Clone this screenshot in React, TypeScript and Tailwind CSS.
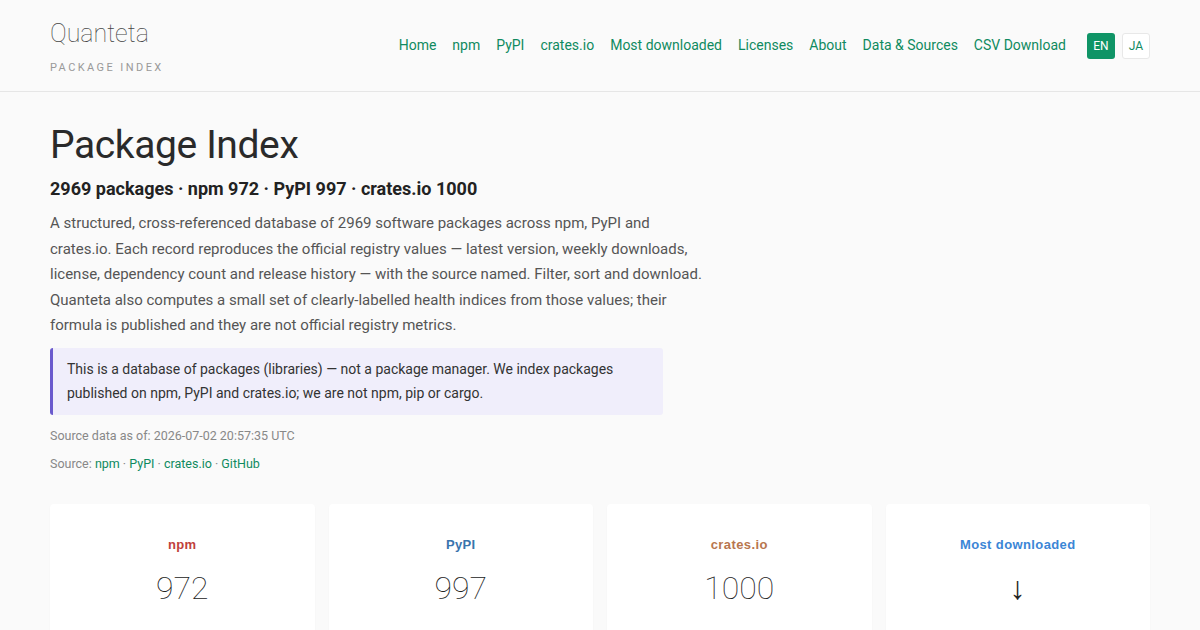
const navLinks = [
  "Home",
  "npm",
  "PyPI",
  "crates.io",
  "Most downloaded",
  "Licenses",
  "About",
  "Data & Sources",
  "CSV Download",
];

const cards = [
  { label: "npm", value: "972", color: "text-[#c0413b]" },
  { label: "PyPI", value: "997", color: "text-[#3a74ad]" },
  { label: "crates.io", value: "1000", color: "text-[#b8764f]" },
  { label: "Most downloaded", value: "↓", color: "text-[#3b86d6]" },
];

const App = () => {
  return (
    <div className="min-h-screen bg-[#fafafa] font-['Roboto',sans-serif] text-[#222]">
      <header className="border-b border-[#e6e6e6]">
        <div className="mx-auto flex h-[91px] w-[1100px] items-center justify-between">
          <div className="pt-[2px]">
            <div className="text-[25px] leading-[30px] font-thin text-[#444]">Quanteta</div>
            <div className="mt-[12px] text-[11px] leading-[14px] tracking-[0.22em] text-[#999]">
              PACKAGE INDEX
            </div>
          </div>
          <nav className="flex items-center">
            {navLinks.map((l) => (
              <a key={l} className="ml-[16px] text-[14px] text-[#0f8a5f]">
                {l}
              </a>
            ))}
            <div className="ml-[21px] flex gap-[7px]">
              <span className="flex h-[26px] w-[28px] items-center justify-center rounded-[3px] bg-[#0f9466] text-[12px] text-white">
                EN
              </span>
              <span className="flex h-[26px] w-[28px] items-center justify-center rounded-[3px] border border-[#e8e8e8] bg-white text-[12px] text-[#0f8a5f]">
                JA
              </span>
            </div>
          </nav>
        </div>
      </header>

      <main className="mx-auto w-[1100px] pt-[30px]">
        <h1 className="text-[39px] leading-[46px] font-normal text-[#2a2a2a] tracking-[-0.01em]">Package Index</h1>
        <h2 className="mt-[10px] text-[18px] leading-[22px] font-bold text-[#222]">
          2969 packages · npm 972 · PyPI 997 · crates.io 1000
        </h2>
        <p className="mt-[11px] w-[660px] text-[15px] leading-[25.6px] text-[#555]">
          A structured, cross-referenced database of 2969 software packages across npm, PyPI and
          <br />
          crates.io. Each record reproduces the official registry values — latest version, weekly downloads,
          license, dependency count and release history — with the source named. Filter, sort and download.
          Quanteta also computes a small set of clearly-labelled health indices from those values; their
          formula is published and they are not official registry metrics.
        </p>
        <div className="mt-[9px] w-[613px] rounded-[3px] border-l-[3px] border-[#6a5acd] bg-[#f0eefb] px-[14px] pt-[9px] pb-[10px] text-[14px] leading-[24px] text-[#333]">
          This is a database of packages (libraries) — not a package manager. We index packages published on
          npm, PyPI and crates.io; we are not npm, pip or cargo.
        </div>
        <div className="mt-[12px] text-[12.5px] leading-[18px] text-[#888]">
          Source data as of: 2026-07-02 20:57:35 UTC
        </div>
        <div className="mt-[10px] text-[12.5px] leading-[18px] text-[#888]">
          Source: <a className="text-[#0f8a5f]">npm</a> · <a className="text-[#0f8a5f]">PyPI</a> ·{" "}
          <a className="text-[#0f8a5f]">crates.io</a> · <a className="text-[#0f8a5f]">GitHub</a>
        </div>

        <div className="mt-[31px] grid grid-cols-4 gap-[14px]">
          {cards.map((c) => (
            <div
              key={c.label}
              className="h-[140px] rounded-[4px] bg-white pt-[33px] text-center shadow-[0_1px_2px_rgba(0,0,0,0.04)]"
            >
              <div className={`font-['Liberation_Sans',sans-serif] text-[13px] leading-[16px] font-bold tracking-[0.03em] ${c.color}`}>
                {c.label}
              </div>
              <div className="mt-[17px] text-[32px] leading-[36px] font-thin text-[#222]">{c.value}</div>
            </div>
          ))}
        </div>
      </main>
    </div>
  );
};

export default App;
